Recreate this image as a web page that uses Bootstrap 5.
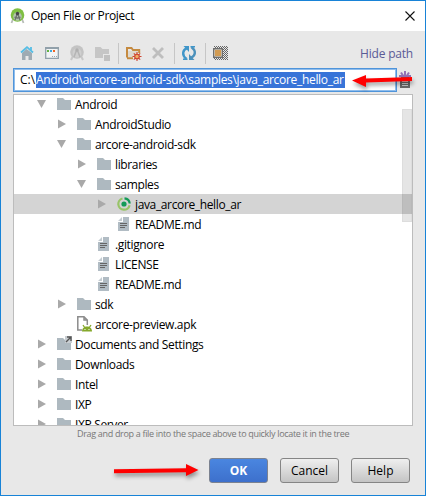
<!DOCTYPE html>
<html lang="en">
<head>
<meta charset="utf-8">
<meta name="viewport" content="width=device-width, initial-scale=1">
<title>Open File or Project</title>
<link href="https://cdn.jsdelivr.net/npm/bootstrap@5.3.0/dist/css/bootstrap.min.css" rel="stylesheet">
<style>
body{font:12px/20px "Open Sans","Noto Sans",sans-serif;color:#000;letter-spacing:-.36px;overflow:hidden}
svg{flex:none;display:block}
.dialog{width:426px;height:496px;background:#e8e8e8;border:1px solid #1883d7}
.titlebar{height:30px;padding:0 10px 0 9px}
.titlebar svg:first-child{margin-right:6px}
.tools{height:37px;padding:11px 12px 4px 18px}
.path-link{color:#5a5a96;font-size:12px;letter-spacing:-.2px;padding-top:2px}
.path-row{height:24px;padding-left:12px}
.path-box{width:384px;height:24px;border:1px solid #4f94da;box-shadow:inset 0 0 0 1px #8fbdec;background:#fff;padding-left:6px;letter-spacing:-.31px}
.path-box .drive{width:16px;letter-spacing:0}
.path-box .sel{background:#3874d8;color:#fff;height:16px;line-height:16px;width:309px}
.trash{margin-left:2px}
.tree{width:400px;height:332px;margin:2px 0 0 12px;border:1px solid #bcbcbc;background:#fff}
.item{height:20px;padding-left:24px}
.item:first-child{margin-top:-1px}
.item>span{padding-top:1px;line-height:19px}
.lv1{padding-left:44px}.lv2{padding-left:64px}.lv3{padding-left:84px}
.twist{width:19px;flex:none}
.twist svg{margin-left:-1px}
.ico{width:18px;flex:none}
.item.on{background:#d4d4d4}
.thumb{right:0;top:14px;width:10px;height:113px;background:rgba(0,0,0,.1);border:1px solid rgba(0,0,0,.03)}
.hint{font-size:9px;line-height:15px;color:#777;letter-spacing:-.32px;padding-left:76px}
.acts{margin-top:17px;padding-right:15px;gap:12px}
.acts .btn{width:59px;height:25px;padding:0;border:1px solid #858585;border-radius:3px;font-size:12px;line-height:23px;color:#000;background:linear-gradient(#efefef,#c4c4c4)}
.acts .btn.ok{color:#fff;font-weight:700;background:linear-gradient(#4a86e0,#3d70cc);border-color:#7b8290}
.arrow{pointer-events:none;filter:drop-shadow(1px 3px 2px rgba(0,0,0,.4))}
.arrow-path{left:349px;top:72px}
.arrow-ok{left:111px;top:461px}
</style>
</head>
<body>
<svg width="0" height="0" class="position-absolute">
<symbol id="folder" viewBox="0 0 14 12"><path d="M0 0h6l2 2h6v10H0z" fill="#aeb9c0"/></symbol>
<symbol id="file" viewBox="0 0 13 14"><path d="M6 0h6v14H1V5h5z" fill="#b1bcc4"/><path d="M1 4l4-4v4z" fill="#c3ccd2"/><path d="M3 6.500h7M3 8.500h7M3 10.500h5" stroke="#666"/></symbol>
<symbol id="right" viewBox="0 0 10 10"><path d="M1 .5l8 4.500-8 4.500z" fill="#a9a9a9"/></symbol>
<symbol id="down" viewBox="0 0 10 10"><path d="M0 1h9L4.500 9z" fill="#a9a9a9"/></symbol>
</svg>
<main class="dialog position-relative overflow-hidden">
<header class="titlebar bg-white d-flex align-items-center">
<svg width="15" height="16" viewBox="0 0 15 16"><path d="M3 11L1.500 15M12 11l1.500 4" stroke="#b7bcb7" stroke-width="1.800"/><circle cx="7.500" cy="7" r="6.800" fill="#7fbf42"/><circle cx="7.500" cy="8.500" r="4.300" fill="#b4c3ae"/><path d="M7.500 5L5 12M7.500 5L10 12M4.500 9q3 2 6 0" stroke="#6b726c" stroke-width="1.300" fill="none"/><circle cx="7.500" cy="5.500" r="1.700" fill="#444"/></svg>
<span>Open File or Project</span>
<svg class="ms-auto" width="10" height="10" viewBox="0 0 10 10"><path d="M.5.5l9 9M9.500.5l-9 9" stroke="#111" stroke-width="1.100"/></svg>
</header>
<section class="tools d-flex align-items-center justify-content-between">
<svg width="210" height="22" viewBox="19 42 210 22" aria-label="Toolbar">
<path d="M22 53l4.500-4 5.500 4v7h-3.500v-4h-3v4H22z" fill="#9eabb3"/><path d="M21 52.500l6-5.300 6 5.300M31 47v3" stroke="#55bde5" stroke-width="1.800" fill="none"/>
<path d="M45.700 47.700h12.600v10.600H45.700z" fill="#f2f4f5" stroke="#91a0aa" stroke-width="1.300"/><path d="M45 47h14v2H45z" fill="#91a0aa"/><path d="M47 50h2v2h-2z" fill="#62b543"/><path d="M50 50h2v2h-2z" fill="#3fa9dc"/><path d="M53 50h2v2h-2z" fill="#f26522"/><path d="M52 56h1v1h-1zM54 56h1v1h-1zM56 56h1v1h-1z" fill="#9aa7b0"/>
<path d="M73 56l-2 4M81 56l2 4" stroke="#c8c8c8" stroke-width="2"/><circle cx="77" cy="52" r="6.800" fill="#c3c3c3"/><circle cx="77" cy="53" r="4.500" fill="#cfcfcf"/><path d="M77 49l-3 8M77 49l3 8" stroke="#b5b5b5" stroke-width="1.500"/><circle cx="77" cy="50" r="1.700" fill="#afafaf"/>
<path d="M95 47h5.500l2 2h6.500v5h-6v4h-8z" fill="#c6c6c6"/><path d="M104 55h6v6h-6z" fill="#c1c1c1"/>
<path d="M118 43h1v22h-1zM174 43h1v22h-1zM205 43h1v22h-1z" fill="#c6c6c6"/>
<path d="M127 57.500V48h4.500l1.500 2h6.200v3M127 58.200h6" fill="none" stroke="#c58a40" stroke-width="2"/><path d="M128 51h10v6h-10z" fill="#ded9d0"/><path d="M137 52v9M132.500 56.500h9M133.800 53.300l6.400 6.400M140.200 53.300l-6.400 6.400" stroke="#ce4430" stroke-width="1.100"/><circle cx="137" cy="56.500" r="2.300" fill="#efad67" stroke="#ce4430" stroke-width="1.100"/>
<path d="M153 48l10 10M163 48l-10 10" stroke="#bebebe" stroke-width="2.800"/>
<path d="M186.500 59C181.500 55 182.500 50 187 48.200" fill="none" stroke="#4096c9" stroke-width="2.400"/><path d="M183.500 46h5.500v6z" fill="#4096c9"/><path d="M191.500 47C196.500 51 195.500 56 191 57.800" fill="none" stroke="#4c91bb" stroke-width="2.400"/><path d="M194.500 60H189v-6z" fill="#4c91bb"/><path d="M183 59.300h4.500M190.500 46.700h4.500" stroke="#4096c9" stroke-width="1.500"/>
<defs><pattern id="dots" width="2" height="2" patternUnits="userSpaceOnUse"><path d="M0 0h1v1H0zM1 1h1v1H1z" fill="#666"/></pattern></defs>
<path d="M214 46h14v14h-14z" fill="url(#dots)"/><path d="M213.700 48.700h8.600v8.600h-8.600z" fill="#f5ead7" stroke="#6f6f6f" stroke-width="1.400"/><path d="M215 50h6v6h-6z" fill="#d29b52"/>
</svg>
<span class="path-link">Hide path</span>
</section>
<section class="path-row d-flex align-items-center">
<div class="path-box d-flex align-items-center"><span class="drive">C:\</span><span class="sel text-nowrap">Android\arcore-android-sdk\samples\java_arcore_hello_ar</span></div>
<svg class="trash" width="12" height="18" viewBox="0 0 12 18"><path d="M2 6h8v1H2zM1 8h10v9H1z" fill="#696969"/><path d="M3 10.500h6M3 12.500h6M3 14.500h6" stroke="#ccc"/><path d="M6 0v6M2 1.500l2 3M10 1.500l-2 3M0 5h12" stroke="#9272b4" stroke-width="2" fill="none"/></svg>
</section>
<section class="tree overflow-hidden position-relative">
<div class="item d-flex align-items-center"><div class="twist"><svg width="10" height="10"><use href="#down"/></svg></div><div class="ico"><svg width="14" height="12"><use href="#folder"/></svg></div><span>Android</span></div>
<div class="item lv1 d-flex align-items-center"><div class="twist"><svg width="10" height="10"><use href="#right"/></svg></div><div class="ico"><svg width="14" height="12"><use href="#folder"/></svg></div><span>AndroidStudio</span></div>
<div class="item lv1 d-flex align-items-center"><div class="twist"><svg width="10" height="10"><use href="#down"/></svg></div><div class="ico"><svg width="14" height="12"><use href="#folder"/></svg></div><span>arcore-android-sdk</span></div>
<div class="item lv2 d-flex align-items-center"><div class="twist"><svg width="10" height="10"><use href="#right"/></svg></div><div class="ico"><svg width="14" height="12"><use href="#folder"/></svg></div><span>libraries</span></div>
<div class="item lv2 d-flex align-items-center"><div class="twist"><svg width="10" height="10"><use href="#down"/></svg></div><div class="ico"><svg width="14" height="12"><use href="#folder"/></svg></div><span>samples</span></div>
<div class="item lv3 on d-flex align-items-center"><div class="twist"><svg width="10" height="10"><use href="#right"/></svg></div><div class="ico"><svg width="14" height="14" viewBox="0 0 14 14"><g fill="none" stroke-width="2.200"><path d="M7.500 1.300A5.700 5.700 0 0 1 12.700 6.500" stroke="#139a57"/><path d="M12.600 8.200A5.700 5.700 0 1 1 5.500 1.500" stroke="#98c468"/></g><circle cx="7" cy="7" r="2.600" fill="#139a57"/></svg></div><span>java_arcore_hello_ar</span></div>
<div class="item lv3 d-flex align-items-center"><div class="twist"></div><div class="ico"><svg width="13" height="14"><use href="#file"/></svg></div><span>README.md</span></div>
<div class="item lv2 d-flex align-items-center"><div class="twist"></div><div class="ico"><svg width="13" height="14"><use href="#file"/></svg></div><span>.gitignore</span></div>
<div class="item lv2 d-flex align-items-center"><div class="twist"></div><div class="ico"><svg width="13" height="14"><use href="#file"/></svg></div><span>LICENSE</span></div>
<div class="item lv2 d-flex align-items-center"><div class="twist"></div><div class="ico"><svg width="13" height="14"><use href="#file"/></svg></div><span>README.md</span></div>
<div class="item lv1 d-flex align-items-center"><div class="twist"><svg width="10" height="10"><use href="#right"/></svg></div><div class="ico"><svg width="14" height="12"><use href="#folder"/></svg></div><span>sdk</span></div>
<div class="item lv1 d-flex align-items-center"><div class="twist"></div><div class="ico"><svg width="15" height="16" viewBox="0 0 15 16"><path d="M5 14H.8V.8H7L10.300 4v5M7 1v3h3" fill="none" stroke="#8c8c8c" stroke-width="1.500"/><path d="M5 15.500c0-3 2-5 5-5s5 2 5 5z" fill="#86a92c"/><path d="M6 9l2 3M14 9l-2 3" stroke="#86a92c" stroke-width="1.300"/><path d="M7.500 13h1v1h-1zM11.500 13h1v1h-1z" fill="#fff"/></svg></div><span>arcore-preview.apk</span></div>
<div class="item d-flex align-items-center"><div class="twist"><svg width="10" height="10"><use href="#right"/></svg></div><div class="ico"><svg width="16" height="16" viewBox="0 0 16 16"><path d="M0 2h6l2 2h6v10H0z" fill="#aeb9c0"/><path d="M8 0h7v7H8z" fill="#c9ced2"/><path d="M10 1h4v4M14 1L9 6" fill="none" stroke="#555" stroke-width="1.400"/></svg></div><span>Documents and Settings</span></div>
<div class="item d-flex align-items-center"><div class="twist"><svg width="10" height="10"><use href="#right"/></svg></div><div class="ico"><svg width="14" height="12"><use href="#folder"/></svg></div><span>Downloads</span></div>
<div class="item d-flex align-items-center"><div class="twist"><svg width="10" height="10"><use href="#right"/></svg></div><div class="ico"><svg width="14" height="12"><use href="#folder"/></svg></div><span>Intel</span></div>
<div class="item d-flex align-items-center"><div class="twist"><svg width="10" height="10"><use href="#right"/></svg></div><div class="ico"><svg width="14" height="12"><use href="#folder"/></svg></div><span>IXP</span></div>
<div class="item d-flex align-items-center"><div class="twist"><svg width="10" height="10"><use href="#right"/></svg></div><div class="ico"><svg width="14" height="12"><use href="#folder"/></svg></div><span>IXP Server</span></div>
<div class="thumb position-absolute"></div>
</section>
<div class="hint text-nowrap">Drag and drop a file into the space above to quickly locate it in the tree</div>
<footer class="acts d-flex justify-content-end"><button class="btn ok">OK</button><button class="btn">Cancel</button><button class="btn">Help</button></footer>
<svg class="arrow arrow-path position-absolute" width="66" height="16" viewBox="350 73 66 16"><path d="M352 80.500L366 75v3.500l46-1.500v4l-46 1.500V87z" fill="#f00"/></svg>
<svg class="arrow arrow-ok position-absolute" width="90" height="18" viewBox="112 462 90 18"><path d="M114 469.200l72-1V464l12.500 6-12.500 6v-3.800l-72 1z" fill="#f00"/></svg>
</main>
</body>
</html>
